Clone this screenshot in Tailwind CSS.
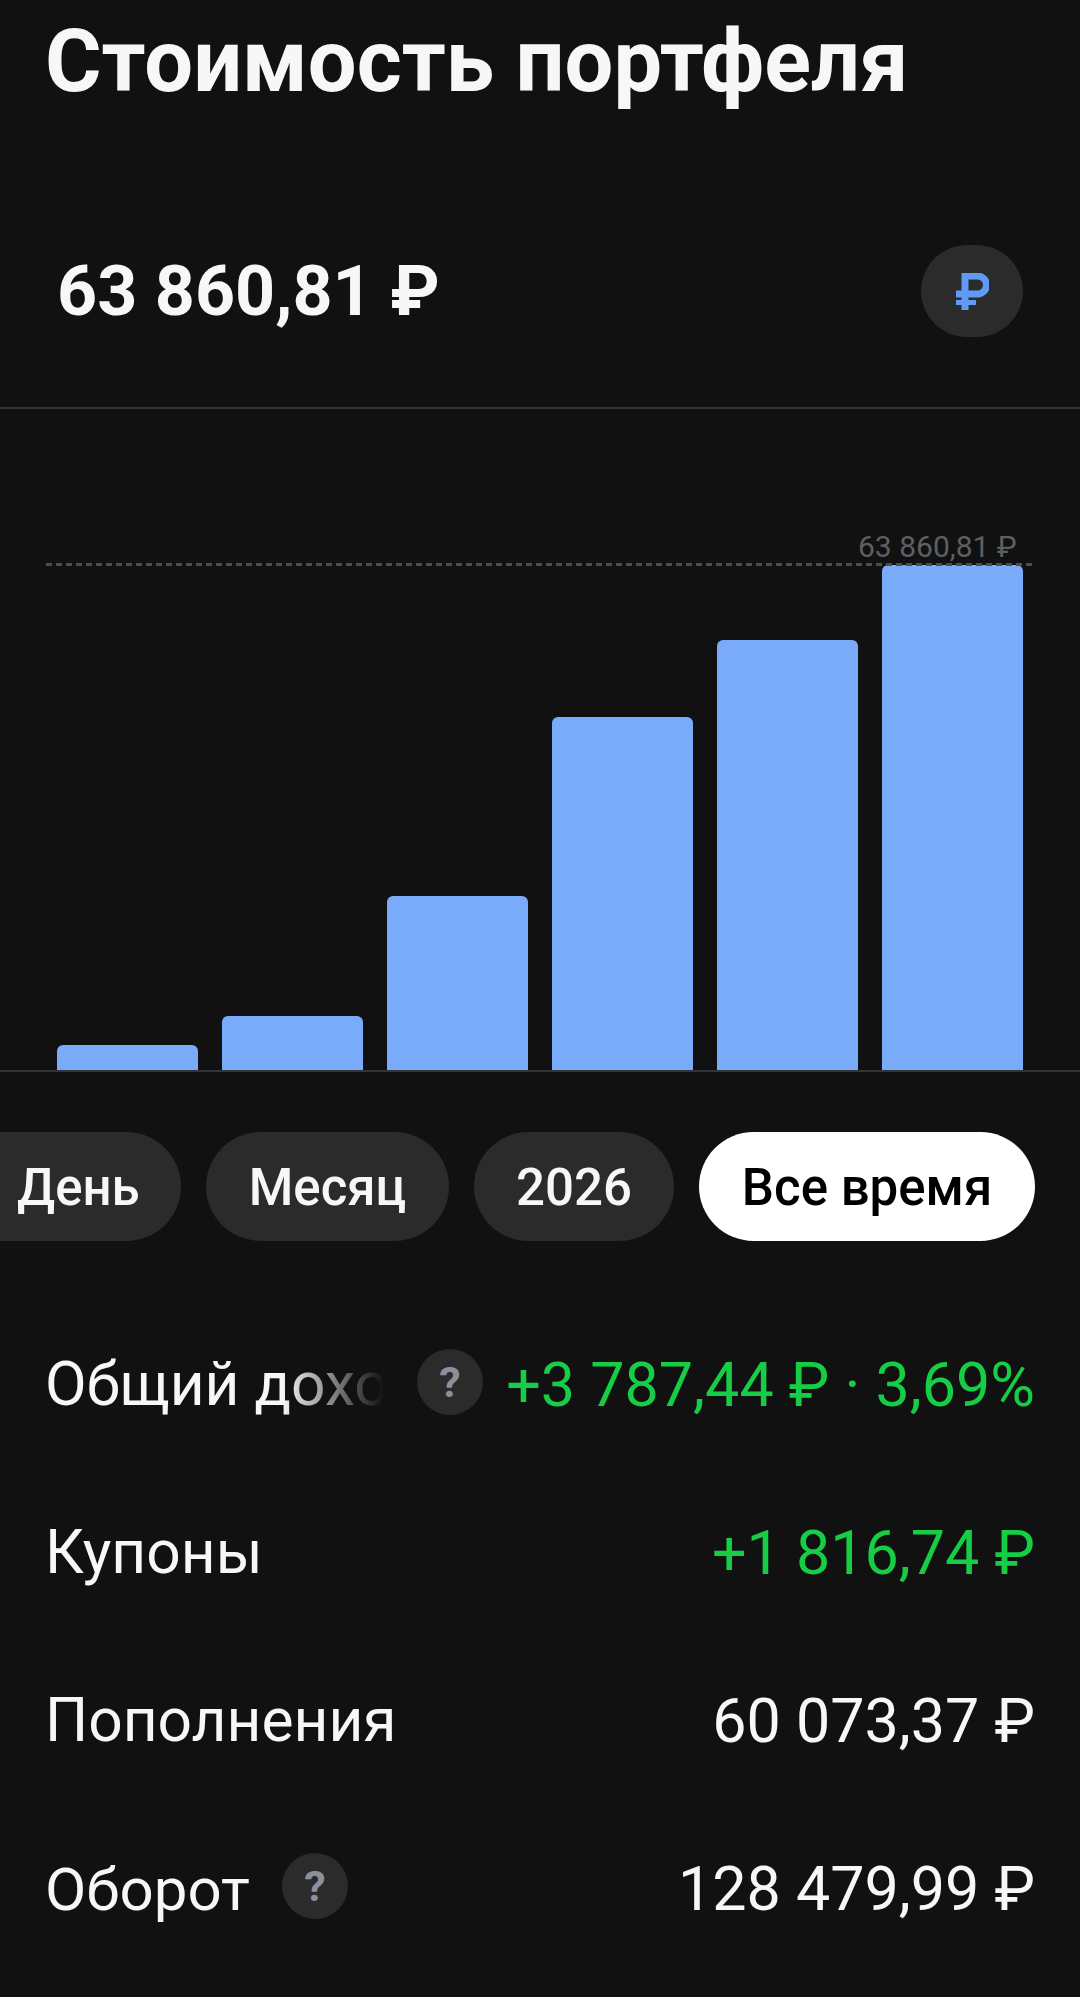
<!DOCTYPE html>
<html lang="ru"><head><meta charset="utf-8"><script src="https://cdn.jsdelivr.net/npm/@tailwindcss/browser@4"></script></head>
<body class="m-0">
<div class="w-[1080px] h-[1997px] overflow-hidden bg-[#111112] text-[#f6f7f8] font-['Roboto',sans-serif]">
  <h1 class="h-[124px] pl-[45px] m-0 text-[86.5px] leading-[124px] font-bold whitespace-nowrap">Стоимость портфеля</h1>
  <div class="h-[285px] pt-[51px] flex items-center justify-between pl-[57px] pr-[57px] border-b-2 border-[#333436] box-border">
    <div class="text-[70px] font-bold leading-none whitespace-nowrap">63 860,81 ₽</div>
    <div class="w-[102px] h-[92px] rounded-full bg-[#2b2b2c] flex items-center justify-center">
      <svg class="w-[33px] h-[37px]" viewBox="0 0 33 37" fill="none" stroke="#5f9bf5" aria-hidden="true">
        <path stroke-width="7" d="M9 37V3H21.5a9 9 0 0 1 0 18H0"/>
        <path stroke-width="5" d="M0 29.5H20"/>
      </svg>
    </div>
  </div>
  <div class="relative h-[663px] border-b-2 border-[#333436] box-border flex items-end gap-[24px] pl-[57px]">
    <div class="absolute left-[46px] w-[989px] top-[154px] h-[3px] bg-[repeating-linear-gradient(to_right,#4d4e50_0_6px,transparent_6px_10px)]"></div>
    <div class="absolute left-[858px] top-[120px] text-[30px] leading-[36px] text-[#5e5f61] whitespace-nowrap">63 860,81 ₽</div>
    <div class="w-[141px] h-[25px] rounded-t-[6px] bg-[#7aabfa]"></div>
    <div class="w-[141px] h-[54px] rounded-t-[6px] bg-[#7aabfa]"></div>
    <div class="w-[141px] h-[174px] rounded-t-[6px] bg-[#7aabfa]"></div>
    <div class="w-[141px] h-[353px] rounded-t-[6px] bg-[#7aabfa]"></div>
    <div class="w-[141px] h-[430px] rounded-t-[6px] bg-[#7aabfa]"></div>
    <div class="w-[141px] h-[505px] rounded-t-[6px] bg-[#7aabfa]"></div>
  </div>
  <div class="h-[109px] mt-[60px] flex gap-[25px] ml-[-61px] text-[51px] font-medium leading-none whitespace-nowrap">
    <div class="w-[242px] pt-[2px] rounded-full bg-[#2b2b2c] flex items-center pl-[78px]">День</div>
    <div class="w-[243px] pt-[2px] rounded-full bg-[#2b2b2c] flex items-center justify-center">Месяц</div>
    <div class="w-[200px] pt-[2px] rounded-full bg-[#2b2b2c] flex items-center justify-center">2026</div>
    <div class="w-[336px] pt-[2px] rounded-full bg-white text-black flex items-center justify-center">Все время</div>
  </div>
  <div class="mt-[57px] pl-[46px] pr-[45px] flex flex-col text-[61px] leading-none whitespace-nowrap">
    <div class="h-[168px] flex items-center">
      <div class="w-[339px] ml-[-1px] pt-[7px] text-[60.5px] overflow-hidden [mask-image:linear-gradient(to_right,black_70%,transparent_100%)]">Общий доход</div>
      <div class="ml-[33px] w-[66px] h-[66px] rounded-full bg-[#2b2b2c] flex items-center justify-center text-[43px] font-bold text-[#8e8f9a]">?</div>
      <div class="ml-auto pt-[7px] text-[#17cd46]">+3 787,44 ₽ · 3,69%</div>
    </div>
    <div class="h-[168px] flex items-center justify-between">
      <div class="ml-[-1px] pt-[7px] text-[60.5px]">Купоны</div>
      <div class="pt-[7px] text-[#17cd46]">+1 816,74 ₽</div>
    </div>
    <div class="h-[168px] flex items-center justify-between">
      <div class="ml-[-1px] pt-[7px] text-[60.5px]">Пополнения</div>
      <div class="pt-[7px]">60 073,37 ₽</div>
    </div>
    <div class="h-[168px] flex items-center">
      <div class="ml-[-1px] pt-[7px] text-[60px]">Оборот</div>
      <div class="ml-[32px] w-[66px] h-[66px] rounded-full bg-[#2b2b2c] flex items-center justify-center text-[43px] font-bold text-[#8e8f9a]">?</div>
      <div class="ml-auto pt-[7px]">128 479,99 ₽</div>
    </div>
  </div>
</div>
</body></html>
